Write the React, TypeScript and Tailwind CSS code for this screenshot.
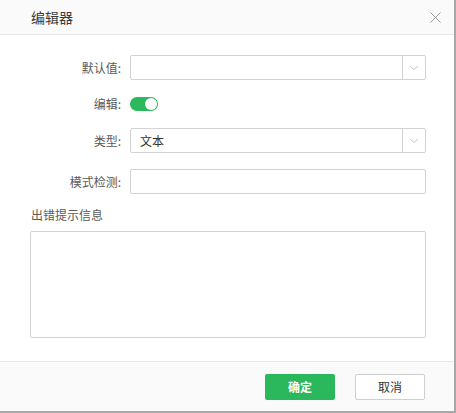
import React from "react";

const font = { fontFamily: '"Noto Sans CJK SC", "Noto Sans", sans-serif' };

function Chevron() {
  return (
    <svg width="10" height="6" viewBox="0 0 10 6" fill="none">
      <path d="M1 1L5 4.5L9 1" stroke="#c4c4c4" strokeWidth="1" />
    </svg>
  );
}

function Row({ label, children, className = "" }: { label: string; children: React.ReactNode; className?: string }) {
  return (
    <div className={`flex items-center ${className}`}>
      <div className="w-[91px] text-right text-[12px] text-[#5a5a5a] leading-none shrink-0">{label}</div>
      <div className="ml-[9px] flex-1 flex items-center">{children}</div>
    </div>
  );
}

export default function App() {
  return (
    <div className="w-[456px] h-[413px] bg-white border-r-2 border-b-2 border-[#a8a8a8] flex flex-col" style={font}>
      <div className="h-[35px] bg-[#fafafa] border-b border-[#e8e8e8] flex items-center justify-between pl-[31px] pr-[13px] shrink-0">
        <span className="text-[14px] text-[#3a3a3a]">编辑器</span>
        <svg width="11" height="11" viewBox="0 0 11 11">
          <path d="M0.5 0.5L10.5 10.5M10.5 0.5L0.5 10.5" stroke="#999" strokeWidth="1" />
        </svg>
      </div>
      <div className="flex-1 flex flex-col pl-[30px] pr-[28px] pt-[20px]">
        <Row label="默认值:">
          <div className="w-full h-[25px] border border-[#d2d2d2] rounded-[2px] flex">
            <div className="flex-1" />
            <div className="w-[23px] border-l border-[#d2d2d2] flex items-center justify-center">
              <Chevron />
            </div>
          </div>
        </Row>
        <Row label="编辑:" className="mt-[11px] h-[25px]">
          <div className="w-[28px] h-[14px] rounded-full bg-[#2cb85c] relative">
            <div className="absolute right-[1px] top-[1px] w-[12px] h-[12px] rounded-full bg-white" />
          </div>
        </Row>
        <Row label="类型:" className="mt-[12px]">
          <div className="w-full h-[25px] border border-[#d2d2d2] rounded-[2px] flex">
            <div className="flex-1 flex items-center pl-[9px] text-[12px] text-[#333]">文本</div>
            <div className="w-[23px] border-l border-[#d2d2d2] flex items-center justify-center">
              <Chevron />
            </div>
          </div>
        </Row>
        <Row label="模式检测:" className="mt-[16px]">
          <div className="w-full h-[25px] border border-[#d2d2d2] rounded-[2px]" />
        </Row>
        <div className="mt-[15px] ml-[1px] text-[12px] text-[#5a5a5a] leading-none">出错提示信息</div>
        <div className="mt-[10px] h-[107px] border border-[#d2d2d2] rounded-[2px]" />
      </div>
      <div className="h-[50px] bg-[#fafafa] border-t border-[#e8e8e8] flex items-center justify-end gap-[20px] pr-[29px] shrink-0">
        <button className="w-[70px] h-[26px] rounded-[2px] bg-[#2bb75c] text-white text-[12px] font-bold">确定</button>
        <button className="w-[70px] h-[26px] rounded-[2px] bg-white border border-[#cfcfcf] text-[#333] text-[12px]">取消</button>
      </div>
    </div>
  );
}
